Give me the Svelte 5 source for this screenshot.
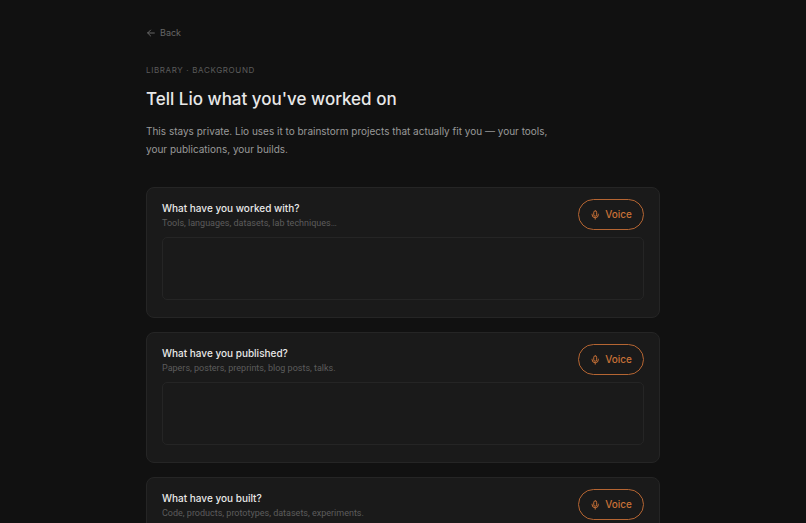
<script>
  const sections = $state([
    { id: 'worked', title: 'What have you worked with?', hint: 'Tools, languages, datasets, lab techniques…', value: '' },
    { id: 'published', title: 'What have you published?', hint: 'Papers, posters, preprints, blog posts, talks.', value: '' },
    { id: 'built', title: 'What have you built?', hint: 'Code, products, prototypes, datasets, experiments.', value: '' }
  ]);
</script>

<main>
  <a class="back" href="#library">
    <svg viewBox="0 0 24 24" width="10" height="10" aria-hidden="true">
      <path d="M20 12H4M11 5l-7 7 7 7" />
    </svg>
    Back
  </a>

  <header>
    <p class="eyebrow">Library · Background</p>
    <h1>Tell Lio what you've worked on</h1>
    <p class="intro">
      This stays private. Lio uses it to brainstorm projects that actually fit you — your tools, your publications, your builds.
    </p>
  </header>

  <div class="cards">
    {#each sections as section (section.id)}
      <section class="card">
        <div class="top">
          <div class="heading">
            <label for={section.id}>{section.title}</label>
            <p id="{section.id}-hint">{section.hint}</p>
          </div>
          <button type="button">
            <svg viewBox="0 0 24 24" width="10" height="10" aria-hidden="true">
              <rect x="9" y="2" width="7" height="13" rx="3.5" />
              <path d="M5 10v1a7.5 7.5 0 0 0 15 0v-1M12.5 19v3" />
            </svg>
            Voice
          </button>
        </div>
        <textarea id={section.id} aria-describedby="{section.id}-hint" bind:value={section.value}></textarea>
      </section>
    {/each}
  </div>
</main>

<style>
  :global(html) {
    scrollbar-width: none;
  }

  :global(body) {
    margin: 0;
    background: #111111;
  }

  main {
    box-sizing: border-box;
    max-width: 546px;
    margin: 0 auto;
    padding: 25px 16px;
    color: #e8e8e8;
    font-family: Inter, "Liberation Sans", sans-serif;
  }

  p,
  h1 {
    margin: 0;
  }

  svg {
    fill: none;
    stroke: currentColor;
    stroke-width: 2.4;
    stroke-linecap: round;
    stroke-linejoin: round;
  }

  .back {
    display: flex;
    align-items: center;
    gap: 4px;
    width: fit-content;
    color: #666666;
    font-size: 9px;
    line-height: 16px;
    text-decoration: none;
  }

  header {
    padding: 23px 0 29px;
  }

  .eyebrow {
    color: #5c5c5c;
    font-size: 8px;
    line-height: 12px;
    letter-spacing: 0.08em;
    text-transform: uppercase;
  }

  h1 {
    margin: 11px 0;
    font-size: 17px;
    line-height: 24px;
    font-weight: 500;
  }

  .intro {
    max-width: 420px;
    color: #999999;
    font-size: 10px;
    line-height: 18px;
  }

  .cards {
    display: grid;
    gap: 14px;
  }

  .card {
    padding: 11px 15px 17px;
    border: 1px solid #252525;
    border-radius: 8px;
    background: #1a1a1a;
  }

  .top {
    display: flex;
    justify-content: space-between;
    margin-bottom: 7px;
  }

  .heading {
    padding-top: 2px;
  }

  .heading label {
    display: block;
    font-size: 10px;
    line-height: 15px;
    font-weight: 500;
  }

  .heading p {
    color: #5c5c5c;
    font-family: Roboto, "Liberation Sans", sans-serif;
    font-size: 9px;
    line-height: 14px;
  }

  button {
    display: flex;
    align-items: center;
    gap: 5px;
    height: 31px;
    padding: 0 11px;
    border: 1px solid #b56532;
    border-radius: 16px;
    background: transparent;
    color: #c87137;
    font: 500 10px/15px Inter, "Liberation Sans", sans-serif;
    cursor: pointer;
  }

  textarea {
    display: block;
    box-sizing: border-box;
    width: 100%;
    height: 63px;
    padding: 8px;
    border: 1px solid #252525;
    border-radius: 5px;
    outline: none;
    background: #1a1a1a;
    color: #e8e8e8;
    font: 10px/15px Inter, "Liberation Sans", sans-serif;
    resize: none;
  }

  textarea:focus {
    border-color: #b56532;
  }
</style>
